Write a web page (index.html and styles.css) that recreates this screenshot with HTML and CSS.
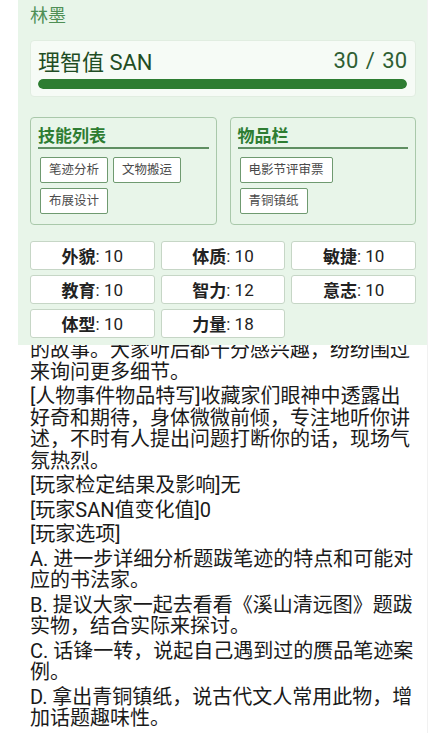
FILE: index.html
```html
<!DOCTYPE html>
<html lang="zh-CN">
<head>
    <meta charset="UTF-8">
    <meta name="viewport" content="width=device-width, initial-scale=1.0">
    <title>林墨 - 角色状态</title>
    <link rel="stylesheet" href="styles.css">
</head>
<body>
    <div class="chat-column">
        <!-- 角色状态面板 -->
        <div class="status-panel">
            <div class="char-name">林墨</div>

            <div class="san-card">
                <div class="san-row">
                    <span class="san-label">理智值 SAN</span>
                    <span class="san-value">30 / 30</span>
                </div>
                <div class="san-track">
                    <div class="san-fill" style="width: 100%"></div>
                </div>
            </div>

            <div class="box-row">
                <div class="info-box">
                    <div class="box-title">技能列表</div>
                    <div class="tag-list">
                        <span class="tag">笔迹分析</span>
                        <span class="tag">文物搬运</span>
                        <span class="tag">布展设计</span>
                    </div>
                </div>
                <div class="info-box">
                    <div class="box-title">物品栏</div>
                    <div class="tag-list">
                        <span class="tag">电影节评审票</span>
                        <span class="tag">青铜镇纸</span>
                    </div>
                </div>
            </div>

            <div class="stat-grid">
                <div class="stat"><b>外貌</b>: 10</div>
                <div class="stat"><b>体质</b>: 10</div>
                <div class="stat"><b>敏捷</b>: 10</div>
                <div class="stat"><b>教育</b>: 10</div>
                <div class="stat"><b>智力</b>: 12</div>
                <div class="stat"><b>意志</b>: 10</div>
                <div class="stat"><b>体型</b>: 10</div>
                <div class="stat"><b>力量</b>: 18</div>
            </div>
        </div>

        <!-- 剧情文本 -->
        <div class="story">
            <p>的故事。大家听后都十分感兴趣，纷纷围过来询问更多细节。</p>
            <p>[人物事件物品特写]收藏家们眼神中透露出好奇和期待，身体微微前倾，专注地听你讲述，不时有人提出问题打断你的话，现场气氛热烈。</p>
            <p>[玩家检定结果及影响]无</p>
            <p>[玩家SAN值变化值]0</p>
            <p>[玩家选项]</p>
            <p>A. 进一步详细分析题跋笔迹的特点和可能对应的书法家。</p>
            <p>B. 提议大家一起去看看《溪山清远图》题跋实物，结合实际来探讨。</p>
            <p>C. 话锋一转，说起自己遇到过的赝品笔迹案例。</p>
            <p>D. 拿出青铜镇纸，说古代文人常用此物，增加话题趣味性。</p>
        </div>
    </div>
</body>
</html>
```

FILE: styles.css
```css
* {
    margin: 0;
    padding: 0;
    box-sizing: border-box;
}

body {
    font-family: Roboto, 'Noto Sans CJK SC', sans-serif;
    background: #fff;
    color: #1a1a1a;
    height: 733px;
    overflow: hidden;
}

.chat-column {
    margin: 0 18px;
    border-right: 1px solid #f1f1f1;
    min-height: 100%;
}

.status-panel {
    position: relative;
    z-index: 1;
    background: #e8f5e9;
    padding: 4px 11px 7px 12px;
}

.char-name {
    font-size: 18px;
    line-height: 24px;
    color: #4f8f55;
}

.san-card {
    margin-top: 12px;
    background: #f6fbf6;
    border: 1px solid #e1ede1;
    border-radius: 4px;
    padding: 5px 8px 7px 7px;
}

.san-row {
    display: flex;
    justify-content: space-between;
    align-items: center;
    height: 28px;
    font-size: 22px;
}

.san-label {
    color: #1f4d24;
}

.san-value {
    color: #2f5f33;
    word-spacing: 2px;
}

.san-track {
    margin-top: 5px;
    height: 10px;
    border-radius: 5px;
    background: #c8e6c9;
    overflow: hidden;
}

.san-fill {
    height: 100%;
    background: #2e7d32;
    border-radius: 5px;
}

.box-row {
    display: grid;
    grid-template-columns: 1fr 1fr;
    gap: 13px;
    margin-top: 20px;
}

.info-box {
    border: 1px solid #a9c8aa;
    border-radius: 4px;
    padding: 7px 7px 8px 7px;
    height: 108px;
}

.box-title {
    font-size: 17px;
    line-height: 22px;
    font-weight: bold;
    color: #2e7d32;
    border-bottom: 2px solid #5f8f62;
}

.tag-list {
    display: flex;
    flex-wrap: wrap;
    gap: 5px;
    margin-top: 8px;
    padding: 0 12px 0 2px;
}

.tag {
    background: #fff;
    border: 1.5px solid #6f9a70;
    border-radius: 2px;
    padding: 4px 8px;
    font-size: 12.5px;
    line-height: 16px;
    color: #4a4a4a;
}

.stat-grid {
    display: grid;
    grid-template-columns: repeat(3, 1fr);
    gap: 5px 6px;
    margin-top: 16px;
}

.stat {
    height: 29px;
    background: #fff;
    border: 1px solid #c6d6c6;
    border-radius: 3px;
    display: flex;
    align-items: center;
    justify-content: center;
    font-size: 17px;
    color: #222;
}

.stat b {
    font-weight: bold;
}

.story {
    position: relative;
    margin-top: -5px;
    padding: 0 12px;
    font-size: 20px;
    line-height: 21.5px;
    color: #1a1a1a;
}

.story p + p {
    margin-top: 3px;
}
```
